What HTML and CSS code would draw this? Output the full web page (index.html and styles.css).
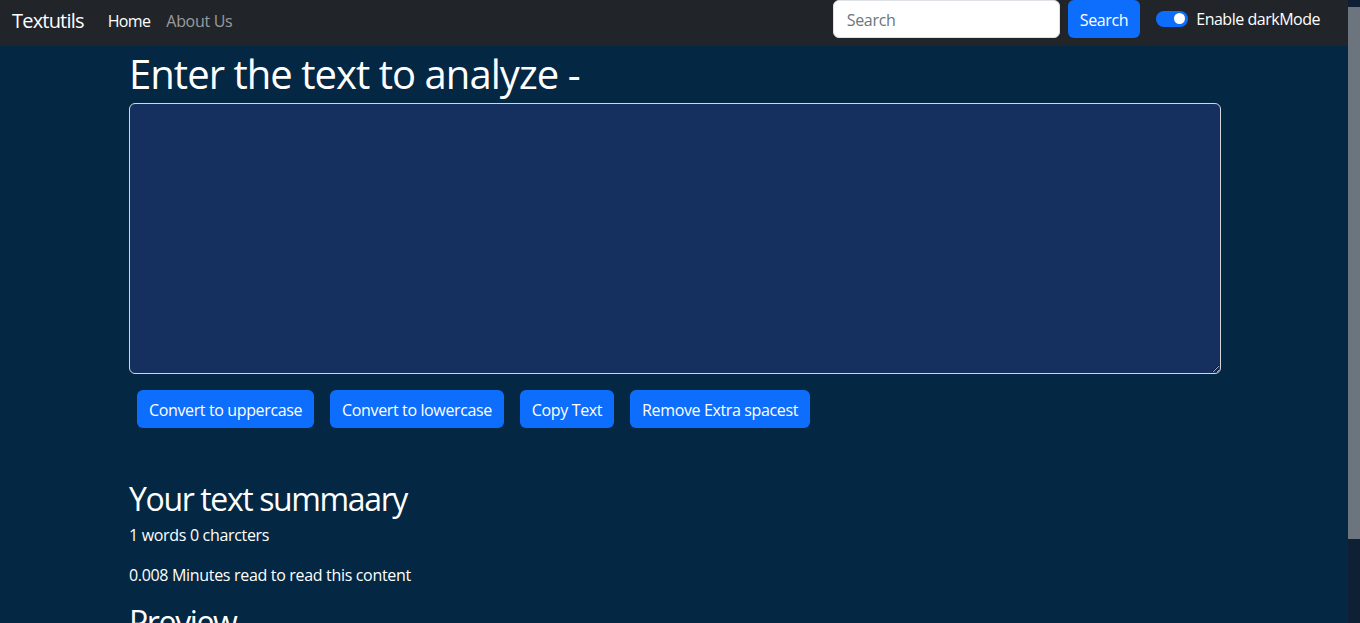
FILE: index.html
```html
<!DOCTYPE html>
<html lang="en">
<head>
    <meta charset="UTF-8">
    <meta name="viewport" content="width=device-width, initial-scale=1.0">
    <title>Textutils</title>
    <link rel="stylesheet" href="styles.css">
</head>
<body>
    <nav class="navbar">
        <div class="nav-left">
            <a class="brand" href="#">Textutils</a>
            <a class="nav-link active" href="#">Home</a>
            <a class="nav-link" href="#">About Us</a>
        </div>
        <div class="nav-right">
            <form class="search-form">
                <input class="search-input" type="search" placeholder="Search">
                <button class="btn" type="submit">Search</button>
            </form>
            <label class="switch">
                <span class="switch-track"><span class="switch-knob"></span></span>
                Enable darkMode
            </label>
        </div>
    </nav>

    <div class="container">
        <h1>Enter the text to analyze -</h1>
        <textarea class="text-box" id="myBox"></textarea>
        <div class="actions">
            <button class="btn">Convert to uppercase</button>
            <button class="btn">Convert to lowercase</button>
            <button class="btn">Copy Text</button>
            <button class="btn">Remove Extra spacest</button>
        </div>
    </div>

    <div class="container summary">
        <h2>Your text summaary</h2>
        <p>1 words 0 charcters</p>
        <p>0.008 Minutes read to read this content</p>
        <h2>Preview</h2>
    </div>

    <div class="scrollbar"><div class="scroll-thumb"></div></div>
</body>
</html>
```
FILE: styles.css
```css
html, body {
    margin: 0;
    height: 100%;
    overflow: hidden;
}
body {
    background-color: #042743;
    color: #ffffff;
    font-family: "Open Sans", "Noto Sans", sans-serif;
    font-size: 16px;
    letter-spacing: -0.02em;
    line-height: 1.5;
    padding-right: 12px;
}
a {
    text-decoration: none;
}
.navbar {
    background-color: #212529;
    height: 46px;
    display: flex;
    justify-content: space-between;
    align-items: flex-start;
    padding: 0 12px;
    box-sizing: border-box;
}
.nav-left {
    display: flex;
    align-items: center;
    height: 41px;
}
.brand {
    color: #ffffff;
    font-size: 20px;
    letter-spacing: -0.04em;
    margin-right: 16px;
}
.nav-link {
    color: rgba(255, 255, 255, 0.55);
    padding: 0 8px;
}
.nav-link.active {
    color: #ffffff;
    letter-spacing: -0.04em;
}
.nav-right {
    display: flex;
    align-items: center;
    margin-right: 16px;
}
.search-form {
    display: flex;
    margin-right: 16px;
}
.search-input {
    width: 227px;
    height: 38px;
    box-sizing: border-box;
    border: 1px solid #dee2e6;
    border-radius: 6px;
    padding: 7px 13px 5px;
    font-family: inherit;
    font-size: 16px;
    letter-spacing: -0.02em;
    margin-right: 8px;
    outline: none;
}
.search-input::placeholder {
    color: #6c757d;
}
.btn {
    background-color: #0d6efd;
    color: #ffffff;
    border: none;
    border-radius: 6px;
    height: 38px;
    padding: 1px 12px 0;
    font-family: inherit;
    font-size: 16px;
    letter-spacing: -0.023em;
    cursor: pointer;
}
.switch {
    display: flex;
    align-items: center;
    gap: 8px;
    margin-top: -1px;
    letter-spacing: -0.03em;
}
.switch-track {
    width: 32px;
    height: 16px;
    border-radius: 8px;
    background-color: #0d6efd;
    display: flex;
    align-items: center;
    justify-content: flex-end;
    padding: 0 3px;
    box-sizing: border-box;
}
.switch-knob {
    width: 11px;
    height: 11px;
    border-radius: 50%;
    background-color: #ffffff;
}
.container {
    width: 1092px;
    margin-left: 129px;
}
h1 {
    font-size: 40px;
    font-weight: 400;
    letter-spacing: -0.024em;
    line-height: 48px;
    margin: 4px 0 5px;
}
.text-box {
    display: block;
    width: 100%;
    height: 271px;
    box-sizing: border-box;
    background-color: #15305f;
    color: #ffffff;
    border: 1px solid #d3d6dc;
    border-radius: 6px;
    padding: 6px 12px;
    font-family: inherit;
    font-size: 16px;
    outline: none;
}
.actions {
    display: flex;
    gap: 16px;
    padding: 16px 8px;
}
.summary {
    margin-top: 36px;
}
h2 {
    font-size: 32px;
    font-weight: 400;
    letter-spacing: -0.043em;
    line-height: 38px;
    margin: 0 0 5px;
}
p {
    margin: 0 0 16px;
}
.scrollbar {
    position: fixed;
    top: 0;
    right: 0;
    width: 12px;
    height: 100%;
    background-color: #0f2035;
}
.scroll-thumb {
    margin-top: 7px;
    height: 532px;
    background-color: #6c757d;
}
```
